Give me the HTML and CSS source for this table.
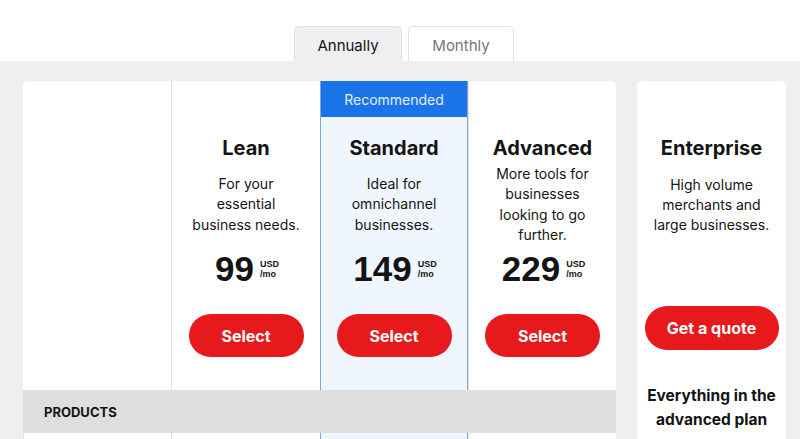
FILE: index.html
```html
<!DOCTYPE html>
<html>
<head>
    <meta charset="utf-8">
    <link rel="stylesheet" href="styles.css">
</head>
<body>
    <div class="top-bar">
        <div class="tabs">
            <div class="tab active">Annually</div>
            <div class="tab">Monthly</div>
        </div>
    </div>

    <div class="plans">
        <div class="compare">
            <div class="col label-col"></div>

            <div class="col plan">
                <div class="band"></div>
                <h2>Lean</h2>
                <div class="desc">For your essential business needs.</div>
                <div class="price"><span class="amount">99</span><span class="unit">USD<br>/mo</span></div>
                <button class="btn">Select</button>
            </div>

            <div class="col plan featured">
                <div class="band">Recommended</div>
                <h2>Standard</h2>
                <div class="desc">Ideal for omnichannel businesses.</div>
                <div class="price"><span class="amount">149</span><span class="unit">USD<br>/mo</span></div>
                <button class="btn">Select</button>
            </div>

            <div class="col plan">
                <div class="band"></div>
                <h2>Advanced</h2>
                <div class="desc narrow">More tools for businesses looking to go further.</div>
                <div class="price"><span class="amount">229</span><span class="unit">USD<br>/mo</span></div>
                <button class="btn">Select</button>
            </div>

            <div class="section-row">PRODUCTS</div>

            <div class="col filler"></div>
            <div class="col filler"></div>
            <div class="col filler featured"></div>
            <div class="col filler"></div>
        </div>

        <div class="enterprise">
            <div class="band"></div>
            <h2>Enterprise</h2>
            <div class="desc wide">High volume merchants and large businesses.</div>
            <button class="btn quote">Get a quote</button>
            <div class="includes">Everything in the advanced plan</div>
        </div>
    </div>
</body>
</html>
```

FILE: styles.css
```css
:root {
    --grey: #efefef;
    --line: #e3e3e3;
    --red: #e8191d;
    --blue: #1a73e8;
    --ink: #141414;
}

body {
    margin: 0;
    font-family: Inter, "Noto Sans", sans-serif;
    color: var(--ink);
    background-color: var(--grey);
}

.top-bar {
    background-color: white;
    height: 61px;
    display: flex;
    align-items: flex-end;
    justify-content: center;
}
.tabs {
    display: flex;
    gap: 6px;
    padding-left: 8px;
}
.tab {
    width: 104px;
    height: 34px;
    line-height: 37px;
    text-align: center;
    font-size: 15px;
    color: #777;
    border: 1px solid var(--line);
    border-bottom: none;
    border-radius: 5px 5px 0 0;
    background-color: white;
}
.tab.active {
    width: 106px;
    background-color: var(--grey);
    color: var(--ink);
}

.plans {
    display: flex;
    gap: 21px;
    padding: 20px 14px 0 23px;
    height: 358px;
    overflow: hidden;
}

.compare {
    width: 593px;
    background-color: white;
    border-radius: 5px 5px 0 0;
    display: grid;
    grid-template-columns: 148px 149px 148px 148px;
    grid-template-rows: 309px 43px 100px;
}
.col {
    border-left: 1px solid var(--line);
}
.label-col {
    border-left: none;
}
.plan, .enterprise {
    display: flex;
    flex-direction: column;
    align-items: center;
    text-align: center;
}
.featured {
    background-color: #eff6fe;
    border-left: 1px solid #7ea9d6;
    border-right: 1px solid #7ea9d6;
}
.band {
    align-self: stretch;
    height: 36px;
    line-height: 37px;
    font-size: 14px;
}
.featured .band {
    background-color: var(--blue);
    color: #e6efff;
}

h2 {
    margin: 18px 0 0;
    font-size: 20px;
    line-height: 26px;
    font-weight: 700;
}
.desc {
    height: 87px;
    width: 110px;
    display: flex;
    align-items: center;
    justify-content: center;
    font-size: 14px;
    line-height: 20.5px;
}
.desc.narrow {
    width: 104px;
}
.desc.wide {
    width: 122px;
    line-height: 20px;
}

.price {
    display: flex;
    align-items: center;
    gap: 6px;
    height: 42px;
    margin-left: 2px;
}
.amount {
    font-family: "Liberation Sans", Arial, sans-serif;
    font-weight: 700;
    font-size: 35px;
}
.unit {
    font-family: "Liberation Sans", Arial, sans-serif;
    font-weight: 700;
    font-size: 9px;
    line-height: 10px;
    text-align: left;
}

.btn {
    margin-top: 24px;
    width: 115px;
    height: 43px;
    border: none;
    border-radius: 22px;
    background-color: var(--red);
    color: white;
    font-family: inherit;
    font-size: 16px;
    font-weight: 700;
}

.section-row {
    grid-column: 1 / -1;
    background-color: #dedede;
    font-size: 13px;
    font-weight: 700;
    line-height: 44px;
    padding-left: 21px;
}
.filler:first-of-type {
    border-left: none;
}

.enterprise {
    width: 149px;
    background-color: white;
    border-radius: 5px 5px 0 0;
}
.btn.quote {
    margin-top: 58px;
    width: 134px;
    height: 44px;
}
.includes {
    margin-top: 34px;
    font-size: 15.5px;
    font-weight: 700;
    line-height: 24px;
    width: 134px;
}
```
